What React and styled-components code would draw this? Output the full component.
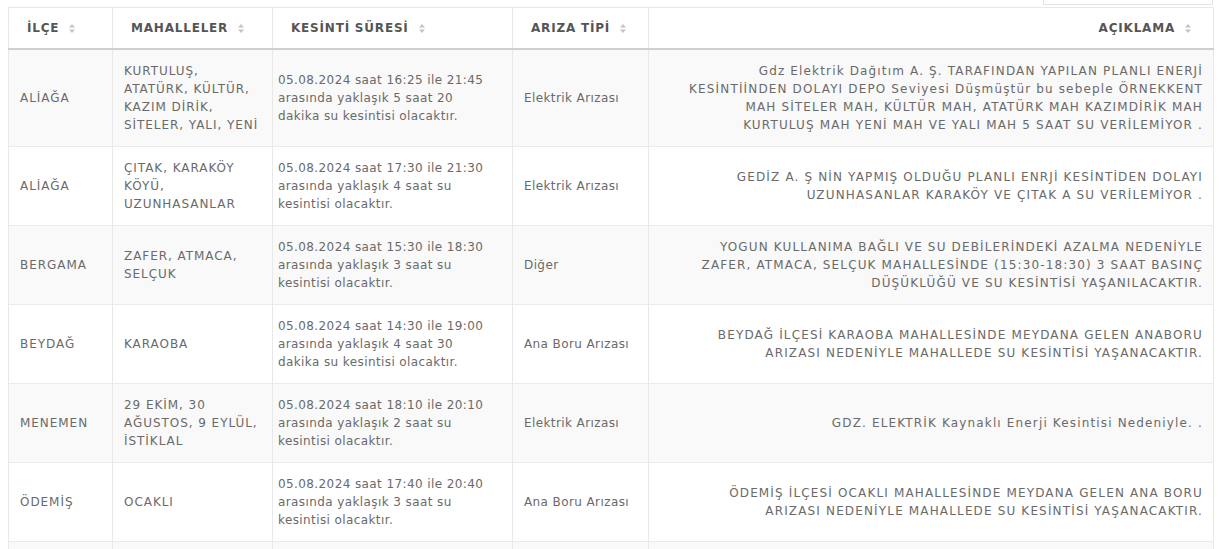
import React from 'react';
import styled, { createGlobalStyle } from 'styled-components';

const GlobalStyle = createGlobalStyle`
  body {
    margin: 0;
    background: #ffffff;
    font-family: 'DejaVu Sans', 'Noto Sans', sans-serif;
  }
`;

const Page = styled.div`
  padding: 0 6px 0 8px;
`;

const Toolbar = styled.div`
  display: flex;
  justify-content: flex-end;
  height: 7px;
`;

const SearchBox = styled.div`
  width: 168px;
  height: 4px;
  border: 1px solid #e4e4e4;
  border-top: none;
`;

const Table = styled.table`
  width: 100%;
  border-collapse: collapse;
  table-layout: fixed;
  border-left: 1px solid #e8e8e8;
  border-right: 1px solid #e8e8e8;
  font-size: 12px;
  line-height: 18px;
`;

const HeadCell = styled.th`
  padding: 11px ${(p) => (p.$align === 'right' ? '22px' : '8px')} 11px
    ${(p) => (p.$align === 'right' ? '8px' : '18px')};
  text-align: ${(p) => p.$align || 'left'};
  font-weight: 700;
  letter-spacing: 0.8px;
  color: #555555;
  border-top: 1px solid #e8e8e8;
  border-left: 1px solid #e8e8e8;
  border-bottom: 2px solid #cfcfcf;
  white-space: nowrap;
`;

const SortIcon = styled.svg`
  width: 6px;
  height: 9px;
  margin-left: 10px;
  vertical-align: -1px;
`;

const Row = styled.tr`
  background: ${(p) => (p.$odd ? '#f9f9f9' : '#ffffff')};
  border-bottom: 1px solid #ebebeb;
`;

const Cell = styled.td`
  height: ${(p) => (p.$empty ? '54px' : 'auto')};
  padding: 12px ${(p) => (p.$align === 'right' ? '10px' : '4px')} 12px
    ${(p) => p.$pl || '11px'};
  text-align: ${(p) => p.$align || 'left'};
  vertical-align: middle;
  color: #6a6a6a;
  letter-spacing: ${(p) => p.$spacing || '0.4px'};
  border-left: 1px solid #e8e8e8;
  white-space: nowrap;
`;

const columns = [
  { title: 'İLÇE', width: 104 },
  { title: 'MAHALLELER', width: 160 },
  { title: 'KESİNTİ SÜRESİ', width: 240 },
  { title: 'ARIZA TİPİ', width: 136 },
  { title: 'AÇIKLAMA', width: 565, align: 'right' },
];

const rows = [
  {
    ilce: 'ALİAĞA',
    mahalle: ['KURTULUŞ,', 'ATATÜRK, KÜLTÜR,', 'KAZIM DİRİK,', 'SİTELER, YALI, YENİ'],
    sure: ['05.08.2024 saat 16:25 ile 21:45', 'arasında yaklaşık 5 saat 20', 'dakika su kesintisi olacaktır.'],
    tip: 'Elektrik Arızası',
    aciklama: [
      'Gdz Elektrik Dağıtım A. Ş. TARAFINDAN YAPILAN PLANLI ENERJİ',
      'KESİNTİİNDEN DOLAYI DEPO Seviyesi Düşmüştür bu sebeple ÖRNEKKENT',
      'MAH SİTELER MAH, KÜLTÜR MAH, ATATÜRK MAH KAZIMDİRİK MAH',
      'KURTULUŞ MAH YENİ MAH VE YALI MAH 5 SAAT SU VERİLEMİYOR .',
    ],
  },
  {
    ilce: 'ALİAĞA',
    mahalle: ['ÇITAK, KARAKÖY', 'KÖYÜ,', 'UZUNHASANLAR'],
    sure: ['05.08.2024 saat 17:30 ile 21:30', 'arasında yaklaşık 4 saat su', 'kesintisi olacaktır.'],
    tip: 'Elektrik Arızası',
    aciklama: [
      'GEDİZ A. Ş NİN YAPMIŞ OLDUĞU PLANLI ENRJİ KESİNTİDEN DOLAYI',
      'UZUNHASANLAR KARAKÖY VE ÇITAK A SU VERİLEMİYOR .',
    ],
  },
  {
    ilce: 'BERGAMA',
    mahalle: ['ZAFER, ATMACA,', 'SELÇUK'],
    sure: ['05.08.2024 saat 15:30 ile 18:30', 'arasında yaklaşık 3 saat su', 'kesintisi olacaktır.'],
    tip: 'Diğer',
    aciklama: [
      'YOGUN KULLANIMA BAĞLI VE SU DEBİLERİNDEKİ AZALMA NEDENİYLE',
      'ZAFER, ATMACA, SELÇUK MAHALLESİNDE (15:30-18:30) 3 SAAT BASINÇ',
      'DÜŞÜKLÜĞÜ VE SU KESİNTİSİ YAŞANILACAKTIR.',
    ],
  },
  {
    ilce: 'BEYDAĞ',
    mahalle: ['KARAOBA'],
    sure: ['05.08.2024 saat 14:30 ile 19:00', 'arasında yaklaşık 4 saat 30', 'dakika su kesintisi olacaktır.'],
    tip: 'Ana Boru Arızası',
    aciklama: [
      'BEYDAĞ İLÇESİ KARAOBA MAHALLESİNDE MEYDANA GELEN ANABORU',
      'ARIZASI NEDENİYLE MAHALLEDE SU KESİNTİSİ YAŞANACAKTIR.',
    ],
  },
  {
    ilce: 'MENEMEN',
    mahalle: ['29 EKİM, 30', 'AĞUSTOS, 9 EYLÜL,', 'İSTİKLAL'],
    sure: ['05.08.2024 saat 18:10 ile 20:10', 'arasında yaklaşık 2 saat su', 'kesintisi olacaktır.'],
    tip: 'Elektrik Arızası',
    aciklama: ['GDZ. ELEKTRİK Kaynaklı Enerji Kesintisi Nedeniyle. .'],
  },
  {
    ilce: 'ÖDEMİŞ',
    mahalle: ['OCAKLI'],
    sure: ['05.08.2024 saat 17:40 ile 20:40', 'arasında yaklaşık 3 saat su', 'kesintisi olacaktır.'],
    tip: 'Ana Boru Arızası',
    aciklama: [
      'ÖDEMİŞ İLÇESİ OCAKLI MAHALLESİNDE MEYDANA GELEN ANA BORU',
      'ARIZASI NEDENİYLE MAHALLEDE SU KESİNTİSİ YAŞANACAKTIR.',
    ],
  },
];

function Lines({ items }) {
  return items.map((line, i) => (
    <React.Fragment key={i}>
      {i > 0 && <br />}
      {line}
    </React.Fragment>
  ));
}

function Sort() {
  return (
    <SortIcon viewBox="0 0 6 9">
      <path d="M3 0 L6 3.5 H0 Z M3 9 L0 5.5 H6 Z" fill="#c4c4c4" />
    </SortIcon>
  );
}

export default function App() {
  return (
    <Page>
      <GlobalStyle />
      <Toolbar>
        <SearchBox />
      </Toolbar>
      <Table>
        <colgroup>
          {columns.map((c) => (
            <col key={c.title} style={{ width: c.width }} />
          ))}
        </colgroup>
        <thead>
          <tr>
            {columns.map((c) => (
              <HeadCell key={c.title} $align={c.align}>
                {c.title}
                <Sort />
              </HeadCell>
            ))}
          </tr>
        </thead>
        <tbody>
          {rows.map((r, i) => (
            <Row key={i} $odd={i % 2 === 0}>
              <Cell $spacing="0.95px">{r.ilce}</Cell>
              <Cell $spacing="0.95px">
                <Lines items={r.mahalle} />
              </Cell>
              <Cell $pl="5px">
                <Lines items={r.sure} />
              </Cell>
              <Cell>{r.tip}</Cell>
              <Cell $spacing="1.15px" $align="right">
                <Lines items={r.aciklama} />
              </Cell>
            </Row>
          ))}
          <Row $odd>
            {columns.map((c) => (
              <Cell key={c.title} $empty />
            ))}
          </Row>
        </tbody>
      </Table>
    </Page>
  );
}
